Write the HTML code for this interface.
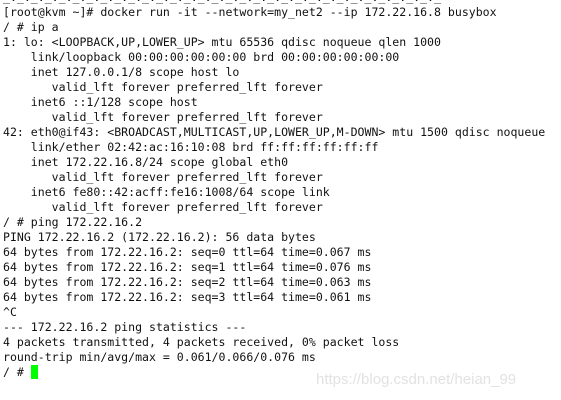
<!DOCTYPE html>
<html><head><style>
body{margin:0;width:561px;height:400px;background:#fff;overflow:hidden;position:relative}
pre{position:absolute;left:3px;top:-10px;margin:0;font-family:"DejaVu Sans Mono","Liberation Mono",monospace;font-size:11.55px;line-height:15px;color:#111}
.c{display:inline-block;width:7px;height:14px;background:#00ff00;vertical-align:-3px}
.w{position:absolute;left:316px;top:371px;font-family:"Liberation Sans",sans-serif;font-size:15px;color:#e2e2e2}
</style></head><body>
<pre>_:_:_:_:_:_:_:_:_:_:_:_:_:_:_:_:_:_:_:_:_:_:_:_:_:_:_:_:_:_:_:_
[root@kvm ~]# docker run -it --network=my_net2 --ip 172.22.16.8 busybox
/ # ip a
1: lo: &lt;LOOPBACK,UP,LOWER_UP&gt; mtu 65536 qdisc noqueue qlen 1000
    link/loopback 00:00:00:00:00:00 brd 00:00:00:00:00:00
    inet 127.0.0.1/8 scope host lo
       valid_lft forever preferred_lft forever
    inet6 ::1/128 scope host
       valid_lft forever preferred_lft forever
42: eth0@if43: &lt;BROADCAST,MULTICAST,UP,LOWER_UP,M-DOWN&gt; mtu 1500 qdisc noqueue
    link/ether 02:42:ac:16:10:08 brd ff:ff:ff:ff:ff:ff
    inet 172.22.16.8/24 scope global eth0
       valid_lft forever preferred_lft forever
    inet6 fe80::42:acff:fe16:1008/64 scope link
       valid_lft forever preferred_lft forever
/ # ping 172.22.16.2
PING 172.22.16.2 (172.22.16.2): 56 data bytes
64 bytes from 172.22.16.2: seq=0 ttl=64 time=0.067 ms
64 bytes from 172.22.16.2: seq=1 ttl=64 time=0.076 ms
64 bytes from 172.22.16.2: seq=2 ttl=64 time=0.063 ms
64 bytes from 172.22.16.2: seq=3 ttl=64 time=0.061 ms
^C
--- 172.22.16.2 ping statistics ---
4 packets transmitted, 4 packets received, 0% packet loss
round-trip min/avg/max = 0.061/0.066/0.076 ms
/ # <span class="c"></span></pre>
<div class="w">https://blog.csdn.net/heian_99</div>
</body></html>
